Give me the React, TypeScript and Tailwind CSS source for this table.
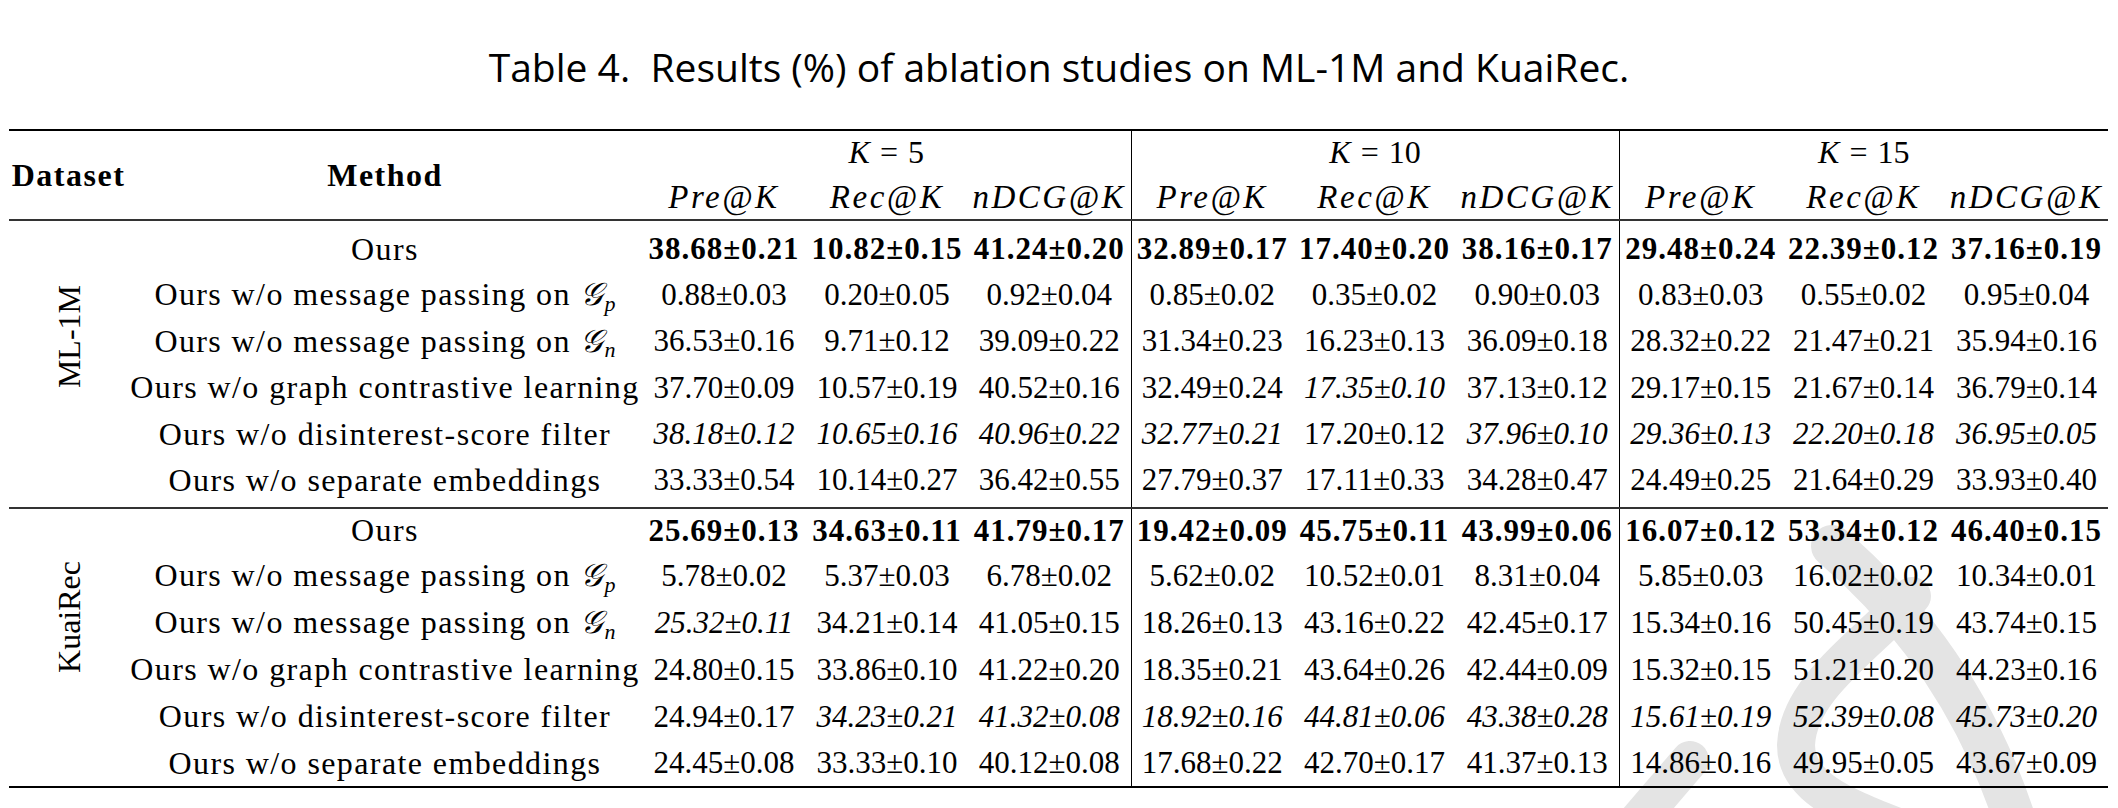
import React from "react";

type Row = { vals: string[]; bold?: boolean };

const G = ({ sub }: { sub: string }) => (
  <span className="whitespace-nowrap">
    <span className="font-['DejaVu_Serif','DejaVu_Sans',serif] italic">𝒢</span>
    <sub className="text-[22px] italic tracking-normal">{sub}</sub>
  </span>
);

const methods: React.ReactNode[] = [
  "Ours",
  <>
    Ours w/o message passing on <G sub="p" />
  </>,
  <>
    Ours w/o message passing on <G sub="n" />
  </>,
  "Ours w/o graph contrastive learning",
  "Ours w/o disinterest-score filter",
  "Ours w/o separate embeddings",
];

const ml: Row[] = [
  { bold: true, vals: ["38.68±0.21", "10.82±0.15", "41.24±0.20", "32.89±0.17", "17.40±0.20", "38.16±0.17", "29.48±0.24", "22.39±0.12", "37.16±0.19"] },
  { vals: ["0.88±0.03", "0.20±0.05", "0.92±0.04", "0.85±0.02", "0.35±0.02", "0.90±0.03", "0.83±0.03", "0.55±0.02", "0.95±0.04"] },
  { vals: ["36.53±0.16", "9.71±0.12", "39.09±0.22", "31.34±0.23", "16.23±0.13", "36.09±0.18", "28.32±0.22", "21.47±0.21", "35.94±0.16"] },
  { vals: ["37.70±0.09", "10.57±0.19", "40.52±0.16", "32.49±0.24", "*17.35±0.10", "37.13±0.12", "29.17±0.15", "21.67±0.14", "36.79±0.14"] },
  { vals: ["*38.18±0.12", "*10.65±0.16", "*40.96±0.22", "*32.77±0.21", "17.20±0.12", "*37.96±0.10", "*29.36±0.13", "*22.20±0.18", "*36.95±0.05"] },
  { vals: ["33.33±0.54", "10.14±0.27", "36.42±0.55", "27.79±0.37", "17.11±0.33", "34.28±0.47", "24.49±0.25", "21.64±0.29", "33.93±0.40"] },
];

const kuai: Row[] = [
  { bold: true, vals: ["25.69±0.13", "34.63±0.11", "41.79±0.17", "19.42±0.09", "45.75±0.11", "43.99±0.06", "16.07±0.12", "53.34±0.12", "46.40±0.15"] },
  { vals: ["5.78±0.02", "5.37±0.03", "6.78±0.02", "5.62±0.02", "10.52±0.01", "8.31±0.04", "5.85±0.03", "16.02±0.02", "10.34±0.01"] },
  { vals: ["*25.32±0.11", "34.21±0.14", "41.05±0.15", "18.26±0.13", "43.16±0.22", "42.45±0.17", "15.34±0.16", "50.45±0.19", "43.74±0.15"] },
  { vals: ["24.80±0.15", "33.86±0.10", "41.22±0.20", "18.35±0.21", "43.64±0.26", "42.44±0.09", "15.32±0.15", "51.21±0.20", "44.23±0.16"] },
  { vals: ["24.94±0.17", "*34.23±0.21", "*41.32±0.08", "*18.92±0.16", "*44.81±0.06", "*43.38±0.28", "*15.61±0.19", "*52.39±0.08", "*45.73±0.20"] },
  { vals: ["24.45±0.08", "33.33±0.10", "40.12±0.08", "17.68±0.22", "42.70±0.17", "41.37±0.13", "14.86±0.16", "49.95±0.05", "43.67±0.09"] },
];

function Num({ v, bold }: { v: string; bold?: boolean }) {
  const it = v.startsWith("*");
  const t = it ? v.slice(1) : v;
  return <span className={bold ? "font-bold tracking-[1px]" : it ? "italic" : ""}>{t}</span>;
}

function Block({
  name,
  rows,
  heights,
  pads,
  labelPad,
  rule,
}: {
  name: string;
  rows: Row[];
  heights: string[];
  pads: string[];
  labelPad: string;
  rule: string;
}) {
  return (
    <tbody className={rule}>
      {rows.map((r, i) => (
        <tr key={i} className={heights[i]}>
          {i === 0 && (
            <td rowSpan={6} className={`align-top p-0 ${labelPad}`}>
              <div className="flex justify-center">
                <div className="[writing-mode:vertical-rl] rotate-180 text-[32px] leading-none">{name}</div>
              </div>
            </td>
          )}
          <td className={`p-0 text-center whitespace-nowrap text-[32px] leading-none tracking-[1.4px] ${pads[i]}`}>
            {methods[i]}
          </td>
          {r.vals.map((v, j) => (
            <td
              key={j}
              className={`p-0 text-center whitespace-nowrap text-[31px] leading-none ${pads[i]} ${j === 3 || j === 6 ? "border-l border-black" : ""}`}
            >
              <Num v={v} bold={r.bold} />
            </td>
          ))}
        </tr>
      ))}
    </tbody>
  );
}

function Metric({ name, line }: { name: string; line?: boolean }) {
  return (
    <th
      className={`p-0 pt-[3px] font-normal italic text-[33px] leading-none tracking-[2.5px] whitespace-nowrap ${line ? "border-l border-black" : ""}`}
    >
      {name}
    </th>
  );
}

function KHead({ k, line }: { k: string; line?: boolean }) {
  return (
    <th colSpan={3} className={`p-0 font-normal text-[32px] leading-none ${line ? "border-l border-black" : ""}`}>
      <span className="italic">K</span>
      <span className="mx-[10px]">=</span>
      {k}
    </th>
  );
}

function Watermark() {
  return (
    <svg className="absolute left-0 top-0 pointer-events-none" width="2118" height="808" viewBox="0 0 2118 808">
      <g fill="none" stroke="#e4e4e4" strokeLinecap="round">
        <path d="M1832 546 Q1965 660 2018 830" strokeWidth="42" />
        <path d="M1912 596 C1860 650 1798 690 1796 745 C1796 790 1850 808 1905 830" strokeWidth="38" />
        <path d="M1690 760 L1630 830" strokeWidth="38" />
      </g>
    </svg>
  );
}

export default function App() {
  return (
    <div className="relative w-[2118px] h-[808px] bg-white overflow-hidden text-black font-['Liberation_Serif','Times_New_Roman',serif]">
      <Watermark />
      <div className="relative">
        <p className="h-[129px] pt-[43px] text-center text-[39px] leading-[48px] font-['Open_Sans','Noto_Sans',sans-serif]">
          Table 4.&nbsp; Results (%) of ablation studies on ML-1M and KuaiRec.
        </p>
        <table className="ml-[9px] w-[2099px] table-fixed border-collapse">
          <colgroup>
            <col className="w-[119px]" />
            <col className="w-[514px]" />
            <col className="w-[164px]" />
            <col className="w-[162px]" />
            <col className="w-[163px]" />
            <col className="w-[162px]" />
            <col className="w-[163px]" />
            <col className="w-[163px]" />
            <col className="w-[163px]" />
            <col className="w-[163px]" />
            <col className="w-[163px]" />
          </colgroup>
          <thead className="border-t-2 border-t-black border-b-2 border-b-[#333]">
            <tr className="h-[43px]">
              <th rowSpan={2} className="p-0 font-bold text-[32px] leading-none tracking-[1.5px]">
                Dataset
              </th>
              <th rowSpan={2} className="p-0 font-bold text-[32px] leading-none tracking-[1.5px]">
                Method
              </th>
              <KHead k="5" />
              <KHead k="10" line />
              <KHead k="15" line />
            </tr>
            <tr className="h-[47px]">
              <Metric name="Pre@K" />
              <Metric name="Rec@K" />
              <Metric name="nDCG@K" />
              <Metric name="Pre@K" line />
              <Metric name="Rec@K" />
              <Metric name="nDCG@K" />
              <Metric name="Pre@K" line />
              <Metric name="Rec@K" />
              <Metric name="nDCG@K" />
            </tr>
          </thead>
          <Block
            name="ML-1M"
            rows={ml}
            heights={["h-[51px]", "h-[46.5px]", "h-[46.5px]", "h-[46.5px]", "h-[46.5px]", "h-[50.5px]"]}
            pads={["pt-[5px]", "", "", "", "", "pb-[4.5px]"]}
            labelPad="pt-[64px]"
            rule="border-b-2 border-b-[#333]"
          />
          <Block
            name="KuaiRec"
            rows={kuai}
            heights={["h-[44px]", "h-[47px]", "h-[47px]", "h-[47px]", "h-[47px]", "h-[47px]"]}
            pads={["", "", "", "", "", ""]}
            labelPad="pt-[52px]"
            rule="border-b-2 border-b-black"
          />
        </table>
      </div>
    </div>
  );
}
